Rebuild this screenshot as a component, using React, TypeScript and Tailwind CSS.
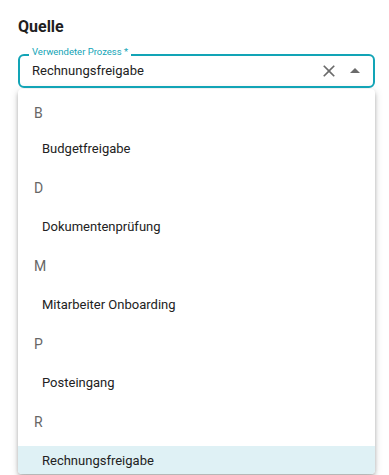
import React from "react";

const groups: { letter: string; item: string }[] = [
  { letter: "B", item: "Budgetfreigabe" },
  { letter: "D", item: "Dokumentenprüfung" },
  { letter: "M", item: "Mitarbeiter Onboarding" },
  { letter: "P", item: "Posteingang" },
  { letter: "R", item: "Rechnungsfreigabe" },
];

export default function App() {
  return (
    <div className="w-[389px] h-[475px] overflow-hidden bg-white pl-[18px] pr-[14px] font-['Roboto',sans-serif]">
      <h2 className="pt-[15px] text-[16px] leading-[24px] font-bold text-[#1f1f1f]">Quelle</h2>
      <div className="relative mt-[15px] h-[34px] rounded-[6px] border-2 border-[#12a4b6] flex items-center pl-[12px] pr-[6px]">
        <span className="absolute -top-[10px] left-[9px] bg-white px-[3px] text-[9.5px] leading-[12px] text-[#12a4b6] whitespace-nowrap">
          Verwendeter Prozess *
        </span>
        <span className="flex-1 text-[13px] leading-[18px] text-[#222]">Rechnungsfreigabe</span>
        <svg width="20" height="20" viewBox="0 0 24 24" className="fill-[#6b6b6b]">
          <path d="M19 6.41 17.59 5 12 10.59 6.41 5 5 6.41 10.59 12 5 17.59 6.41 19 12 13.41 17.59 19 19 17.59 13.41 12z" />
        </svg>
        <svg width="24" height="24" viewBox="0 0 24 24" className="ml-[4px] fill-[#6b6b6b]">
          <path d="m7 14 5-5 5 5z" />
        </svg>
      </div>
      <div className="mt-[1px] h-[385px] overflow-hidden rounded-[4px] bg-white shadow-[0_2px_4px_-1px_rgba(0,0,0,0.2),0_4px_5px_0_rgba(0,0,0,0.14),0_1px_10px_0_rgba(0,0,0,0.12)]">
        {groups.map((g, i) => (
          <div key={g.letter}>
            <div
              className={
                i === 0
                  ? "h-[45px] pt-[3px] flex items-center px-4 text-[14px] text-[#666]"
                  : "h-12 flex items-center px-4 text-[14px] text-[#666]"
              }
            >
              {g.letter}
            </div>
            <div
              className={
                g.letter === "R"
                  ? "h-[30px] flex items-center pl-6 text-[13px] text-[#222] bg-[#dff1f5]"
                  : "h-[30px] flex items-center pl-6 text-[13px] text-[#222]"
              }
            >
              {g.item}
            </div>
          </div>
        ))}
      </div>
    </div>
  );
}
